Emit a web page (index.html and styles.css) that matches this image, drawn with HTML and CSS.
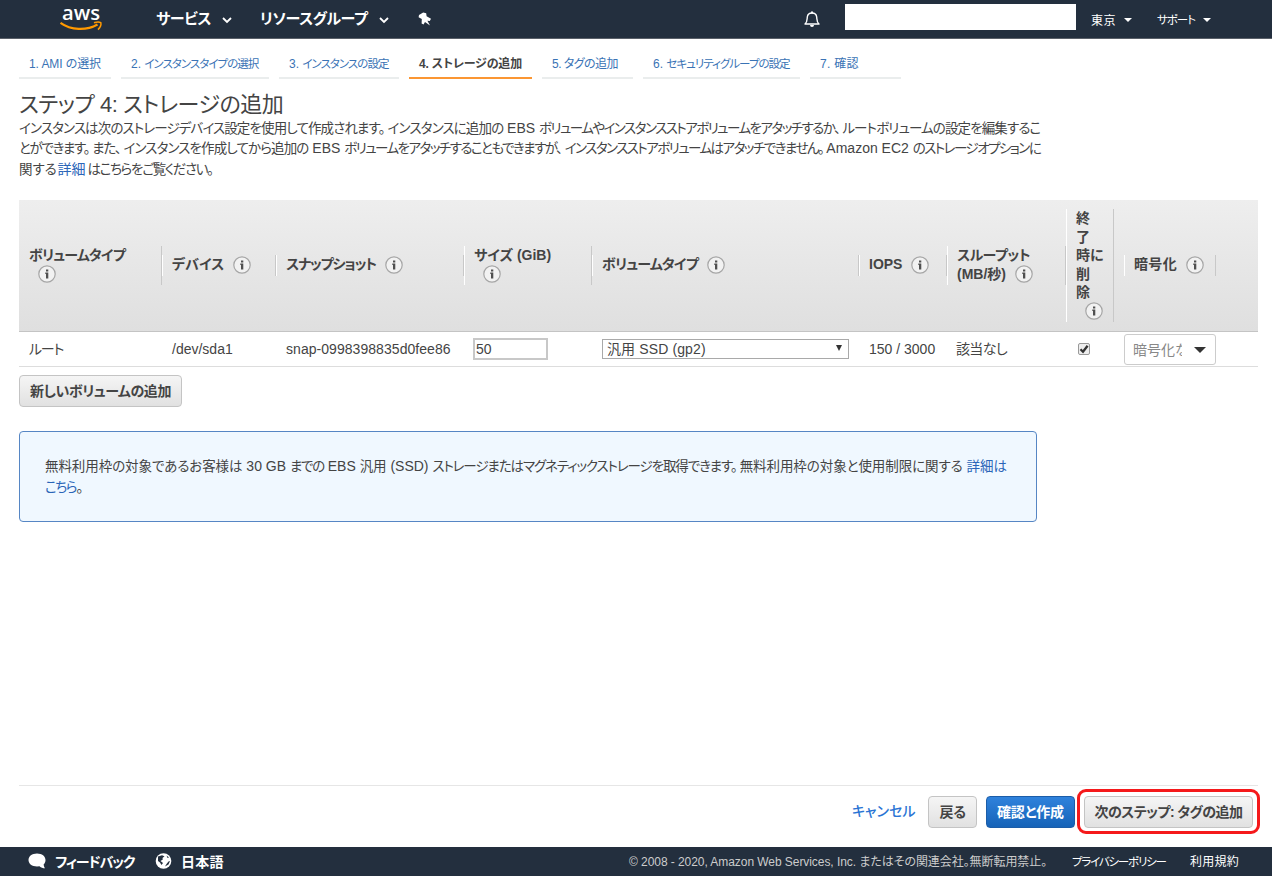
FILE: index.html
```html
<!DOCTYPE html>
<html lang="ja">
<head>
  <meta charset="UTF-8">
  <meta name="viewport" content="width=device-width, initial-scale=1">
  <title>EC2 - ストレージの追加</title>
  <link rel="stylesheet" href="styles.css">
</head>
<body>
  <header class="navbar">
    <svg class="logo" width="44" height="36" viewBox="0 -3 44 36">
      <text class="logo-text" x="2" y="15.5" textLength="38" lengthAdjust="spacingAndGlyphs">aws</text>
      <path d="M0.5 18.8C11 26.3 26 27 37.5 20.5" fill="none" stroke="#ff9900" stroke-width="2.2"/>
      <path d="M34 18.8C36.5 17.8 39.5 17.8 40.8 18.6C41.4 20.6 40 23.6 38 25.6" fill="none" stroke="#ff9900" stroke-width="1.5"/>
    </svg>
    <a class="nav-item nav-service"><span>サービス</span><svg class="chevron" width="10" height="7" viewBox="0 0 10 7"><path d="M1 1l4 4L9 1"/></svg></a>
    <a class="nav-item nav-group"><span>リソースグループ</span><svg class="chevron" width="10" height="7" viewBox="0 0 10 7"><path d="M1 1l4 4L9 1"/></svg></a>
    <svg class="pin" width="14" height="14" viewBox="0 0 14 14"><path d="M5.2 0.5L8.2 1.2L8.6 4.2L13 6.8L11.8 9L9.4 8.8L12 13.4L7 10L5.5 12.4L3.6 11.5L3.8 7L0.6 5.2L1 3Z" fill="#fff"/></svg>
    <div class="nav-right">
      <svg class="bell" width="18" height="18" viewBox="0 0 18 18"><path d="M2 14C4.5 12 4 9.5 4.3 7C4.6 4.5 6.5 3 9 3S13.4 4.5 13.7 7C14 9.5 13.5 12 16 14Z" fill="none" stroke="#fff" stroke-width="1.4" stroke-linejoin="round"/><path d="M7 15h4a2 2 0 0 1-4 0zM8 1.5h2v2H8z" fill="#fff"/></svg>
      <div class="account"></div>
      <a class="nav-small nav-region"><span>東京</span><i class="caret"></i></a>
      <a class="nav-small nav-support"><span>サポート</span><i class="caret"></i></a>
    </div>
  </header>

  <main class="content">
    <nav class="steps">
      <a class="step step-1">1. AMI の選択</a>
      <a class="step step-2">2. <span class="narrow">インスタンスタイプの選択</span></a>
      <a class="step step-3">3. <span class="narrow">インスタンスの設定</span></a>
      <a class="step step-4 active">4. ストレージの追加</a>
      <a class="step step-5">5. タグの追加</a>
      <a class="step step-6">6. <span class="narrow">セキュリティグループの設定</span></a>
      <a class="step step-7">7. 確認</a>
    </nav>

    <h1>ステップ 4: ストレージの追加</h1>
    <p class="lead">
      <span class="mixed end">インスタンスは次のストレージデバイス設定を使用して作成されます。</span><span class="mixed">インスタンスに追加の</span> EBS <span class="kana end">ボリュームやインスタンスストアボリュームをアタッチするか、</span><span class="mixed">ルートボリュームの設定を編集するこ</span><br>
      <span class="hira end">とができます。</span><span class="hira end">また、</span><span class="mixed">インスタンスを作成してから追加の</span> EBS <span class="kana end">ボリュームをアタッチすることもできますが、</span><span class="kana end">インスタンスストアボリュームはアタッチできません。</span>Amazon EC2 <span class="kana">のストレージオプションに</span><br>
      <span class="kanji">関する</span><a class="link inline-link">詳細</a><span class="hira">はこちらをご覧ください。</span>
    </p>

    <section class="volumes">
      <div class="row row-head">
        <div class="th first"><span class="th-type">ボリュームタイプ</span><br><svg class="info"><use href="#info"/></svg></div>
        <div class="th"><span>デバイス</span><svg class="info"><use href="#info"/></svg></div>
        <div class="th"><span class="th-snap">スナップショット</span><svg class="info"><use href="#info"/></svg></div>
        <div class="th"><span>サイズ (GiB)</span><br><svg class="info"><use href="#info"/></svg></div>
        <div class="th"><span class="th-type">ボリュームタイプ</span><svg class="info"><use href="#info"/></svg></div>
        <div class="th"><span>IOPS</span><svg class="info"><use href="#info"/></svg></div>
        <div class="th"><span class="th-through">スループット</span><br><span>(MB/秒)</span><svg class="info"><use href="#info"/></svg></div>
        <div class="th">終<br>了<br>時に<br>削<br>除<br><svg class="info"><use href="#info"/></svg></div>
        <div class="th encrypt"><span class="th-enc">暗号化</span><svg class="info"><use href="#info"/></svg></div>
      </div>
      <div class="row row-body">
        <div class="td td-root">ルート</div>
        <div class="td">/dev/sda1</div>
        <div class="td td-snap">snap-0998398835d0fee86</div>
        <div class="td"><input class="size" type="text" value="50"></div>
        <div class="td"><div class="select"><span>汎用 SSD (gp2)</span><i class="select-arrow"></i></div></div>
        <div class="td">150 / 3000</div>
        <div class="td td-na">該当なし</div>
        <div class="td"><div class="checkbox"><svg width="10" height="10" viewBox="0 0 10 10"><path d="M1.5 5.3L4 7.8L8.6 1.8" fill="none" stroke="#333" stroke-width="2.3"/></svg></div></div>
        <div class="td"><div class="combo"><span class="combo-text">暗号化な</span><i class="combo-arrow"></i></div></div>
      </div>
    </section>

    <button class="btn add">新しいボリュームの追加</button>

    <div class="notice">
      <span class="kanji">無料利用枠の対象であるお客様は</span> 30 GB <span class="hira">までの</span> EBS <span class="kanji">汎用</span> (SSD) <span class="storage end">ストレージまたはマグネティックストレージを取得できます。</span><span class="kanji">無料利用枠の対象と使用制限に関する</span> <a class="link kanji">詳細は</a><br>
      <a class="link hira">こちら</a>。
    </div>
  </main>

  <div class="actions">
    <a class="cancel">キャンセル</a>
    <button class="btn back">戻る</button>
    <button class="btn primary">確認と作成</button>
    <div class="highlight"><button class="btn next">次のステップ: タグの追加</button></div>
  </div>

  <footer class="footer">
    <svg width="18" height="16" viewBox="0 0 18 16"><path d="M9 0.5C4 0.5 0.5 3.3 0.5 7S4 13.5 9 13.5L11.5 13.2C13 14.5 15 15.3 17 15.3C16 14 15.7 12.8 15.7 11.3C17 10.2 17.5 8.7 17.5 7C17.5 3.3 14 0.5 9 0.5Z" fill="#fff"/></svg>
    <a class="foot-link feedback">フィードバック</a>
    <svg width="17" height="16" viewBox="0 0 17 16"><circle cx="8.5" cy="8" r="7.8" fill="#fff"/><path d="M3 3.5L7 2.2L9.5 3.2L7.5 5L7.8 6.5L5.5 8L8 10L6.5 12L5 9.5L3 8ZM11.5 2.5L14 4.5L12.5 5ZM13.5 8.5L15 8L13.5 11.5L10 13.5L11.5 11Z" fill="#232f3e"/></svg>
    <a class="foot-link lang">日本語</a>
    <div class="foot-right">
      <span class="copyright">© 2008 - 2020, Amazon Web Services, Inc. またはその関連会社。無断転用禁止。</span>
      <a class="foot-small privacy">プライバシーポリシー</a>
      <a class="foot-small terms">利用規約</a>
    </div>
  </footer>

  <svg class="defs" width="0" height="0">
    <symbol id="info" viewBox="0 0 18 18">
      <circle cx="9" cy="9" r="8.2" fill="#f2f2f2" stroke="#a6a6a6" stroke-width="1.2"/>
      <path d="M8 4.4h2.3v2.1H8zM7.3 7.5h3v6.1H8V9H7.3z" fill="#505050"/>
    </symbol>
  </svg>
</body>
</html>
```
FILE: styles.css
```css
* {
  box-sizing: border-box;
}
body {
  margin: 0;
  height: 876px;
  display: flex;
  flex-direction: column;
  overflow: hidden;
  background: #fff;
  color: #444;
  font-family: "Liberation Sans", "Noto Sans CJK JP", sans-serif;
  font-size: 14px;
  font-feature-settings: "palt";
  white-space: nowrap;
}
a {
  text-decoration: none;
}
.link {
  color: #2a65b8;
}
.defs {
  display: none;
}

/* top bar */
.navbar {
  height: 39px;
  flex-shrink: 0;
  display: flex;
  align-items: center;
  padding-left: 60px;
  background: #232f3e;
  border-bottom: 1px solid #5a6069;
  color: #fff;
}
.logo {
  overflow: visible;
}
.logo-text {
  font: 600 20px "Open Sans", sans-serif;
  fill: #fff;
}
.nav-item {
  display: flex;
  align-items: center;
  font-size: 15px;
  font-weight: bold;
  line-height: 20px;
  letter-spacing: -0.4px;
}
.nav-service {
  width: 104px;
  margin-left: 52px;
}
.nav-group {
  width: 158px;
}
.chevron {
  margin: 2px 0 0 11px;
  fill: none;
  stroke: #fff;
  stroke-width: 1.8;
}
.nav-right {
  margin-left: auto;
  display: flex;
  align-items: center;
  font-size: 12px;
}
.account {
  width: 231px;
  height: 26px;
  margin: -4px 15px 0 24px;
  background: #fff;
}
.nav-small {
  display: flex;
  align-items: center;
}
.nav-region {
  width: 66px;
  letter-spacing: 0.5px;
}
.nav-support {
  width: 115px;
  font-size: 11.5px;
  letter-spacing: -1px;
}
.caret {
  margin: 2px 0 0 8px;
  border: 4px solid transparent;
  border-top-color: #fff;
  border-bottom: 0;
}

/* wizard */
.content {
  flex: 1;
  padding: 0 14px 0 19px;
}
.steps {
  display: flex;
  gap: 10px;
  height: 40px;
  font-size: 12px;
}
.step {
  width: 91px;
  padding-left: 10px;
  line-height: 50px;
  height: 40px;
  border-bottom: 2px solid #eaeded;
  color: #3a73b5;
}
.step-1 {
  width: 92px;
  letter-spacing: -0.09px;
}
.step-2 {
  width: 148px;
}
.step-3 {
  width: 120px;
}
.step-4 {
  width: 123px;
  letter-spacing: -0.16px;
}
.step-5 {
  letter-spacing: -0.54px;
}
.step-6 {
  width: 157px;
}
.step-7 {
  letter-spacing: 0.3px;
}
.step.active {
  border-color: #fb9632;
  color: #444;
  font-weight: bold;
}
.narrow {
  font-size: 11.5px;
  letter-spacing: -0.98px;
}
h1 {
  margin: 13px 0 0;
  font-size: 22px;
  font-weight: normal;
  line-height: 26px;
  letter-spacing: -0.48px;
}
.lead {
  height: 61px;
  margin: 0 0 21px;
  line-height: 20.4px;
}

.kana,
.hira,
.mixed,
.kanji,
.storage {
  font-size: 13.5px;
  line-height: 18px;
}
.kana {
  letter-spacing: -1.54px;
}
.hira {
  letter-spacing: -1.35px;
}
.storage {
  letter-spacing: -1.12px;
}
.mixed {
  letter-spacing: -0.88px;
}
.kanji {
  letter-spacing: -0.07px;
}
.end {
  margin-right: 3.2px;
}
.inline-link {
  margin: 0 2px 0 1px;
}

/* volumes */
.volumes {
  width: 1239px;
}
.row {
  display: grid;
  grid-template-columns: 143px 114px 188px 128px 267px 88px 119px 48px 144px;
  align-items: center;
}
.row-head {
  height: 132px;
  background: linear-gradient(#eee, #dfdfdf);
  border-bottom: 1px solid #c4c4c4;
  font-weight: bold;
  line-height: 18.5px;
}
.th {
  padding-left: 9px;
  border-left: 1px solid #fff;
  border-right: 1px solid #c8c8c8;
}
.th.first {
  border-left-color: transparent;
}
.th.encrypt {
  width: 92px;
  margin-left: 10px;
}
.th-type {
  letter-spacing: -0.76px;
}
.th-snap {
  letter-spacing: -1.1px;
}
.th-through {
  letter-spacing: -0.5px;
}
.th-enc {
  letter-spacing: 0.33px;
}
.info {
  width: 18px;
  height: 18px;
  margin: 0 0 2px 9px;
  vertical-align: middle;
}
.row-body {
  height: 35px;
  border-bottom: 1px solid #ddd;
}
.td {
  padding-left: 10px;
}
.td-root {
  padding-bottom: 2px;
  letter-spacing: -1.2px;
}
.td-snap {
  letter-spacing: 0.05px;
}
.td-na {
  padding: 0 0 2px 9px;
  letter-spacing: -0.64px;
}
.size {
  display: block;
  width: 75px;
  height: 22px;
  margin-left: -1px;
  padding: 0 1px;
  border: 2px solid #c8c8c8;
  border-radius: 0;
  background: #fff;
  color: #444;
  font: 14px "Liberation Sans", sans-serif;
}
.select {
  display: flex;
  align-items: center;
  justify-content: space-between;
  width: 247px;
  height: 20px;
  padding: 0 6px 2px 4px;
  border: 1px solid #a9a9a9;
  letter-spacing: 0.12px;
}
.select-arrow {
  border: 3px solid transparent;
  border-top: 6px solid #333;
  border-bottom: 0;
}
.checkbox {
  width: 12px;
  height: 12px;
  margin-left: 2px;
  display: flex;
  border: 1px solid #999;
  border-radius: 2px;
  background: #eee;
}
.combo {
  display: flex;
  align-items: center;
  width: 92px;
  height: 31px;
  padding: 0 0 1px 8px;
  border: 1px solid #ccc;
  border-radius: 3px;
  color: #888;
}
.combo-text {
  width: 49px;
  overflow: hidden;
}
.combo-arrow {
  margin: 2px 0 0 12px;
  border: 6px solid transparent;
  border-top-color: #333;
  border-bottom: 0;
}

/* buttons */
.btn {
  height: 32px;
  padding: 0 0 3px;
  border: 1px solid #c4c4c4;
  border-radius: 4px;
  background: linear-gradient(#f5f5f5, #e1e1e1);
  color: #444;
  font: bold 14px "Liberation Sans", "Noto Sans CJK JP", sans-serif;
  font-feature-settings: "palt";
}
.btn.add {
  display: block;
  width: 163px;
  margin-top: 8px;
  letter-spacing: -0.43px;
}
.btn.back {
  width: 49px;
  margin-right: 9px;
  letter-spacing: -0.4px;
}
.btn.primary {
  width: 89px;
  margin-right: 9px;
  border-color: #1c5da8;
  background: linear-gradient(#2f82dc, #1663b8);
  color: #fff;
  letter-spacing: -0.14px;
}
.btn.next {
  width: 169px;
  letter-spacing: -0.54px;
}
.notice {
  width: 1018px;
  height: 91px;
  margin-top: 24px;
  padding: 24px 25px;
  border: 1px solid #5686c4;
  border-radius: 4px;
  background: #f0f8ff;
  line-height: 20.5px;
}
.actions {
  display: flex;
  align-items: flex-start;
  justify-content: flex-end;
  height: 62px;
  margin: 0 14px 0 19px;
  padding: 10px 5px 0 0;
  border-top: 1px solid #e6e6e6;
}
.cancel {
  width: 76px;
  color: #2a74d4;
  font-weight: 500;
  line-height: 30px;
}
.highlight {
  position: relative;
}
.highlight::after {
  content: "";
  position: absolute;
  inset: -7px -7px -6px -7px;
  border: 3px solid #f5191b;
  border-radius: 9px;
}

/* footer */
.footer {
  display: flex;
  align-items: center;
  height: 29px;
  flex-shrink: 0;
  padding: 0 33px 2px 28px;
  background: #232f3e;
  color: #fff;
}
.foot-link {
  font-size: 14px;
  font-weight: bold;
}
.feedback {
  width: 100px;
  margin-left: 9px;
  letter-spacing: -1.15px;
}
.lang {
  margin-left: 9px;
  letter-spacing: 0.3px;
}
.foot-right {
  display: flex;
  align-items: center;
  margin-left: auto;
  color: #ccc;
  font-size: 12px;
}
.copyright {
  width: 443px;
  letter-spacing: -0.06px;
}
.foot-small {
  color: #fff;
}
.privacy {
  width: 118px;
  font-size: 11.5px;
  letter-spacing: -1.2px;
}
.terms {
  width: 49px;
  letter-spacing: 0.25px;
}
```
